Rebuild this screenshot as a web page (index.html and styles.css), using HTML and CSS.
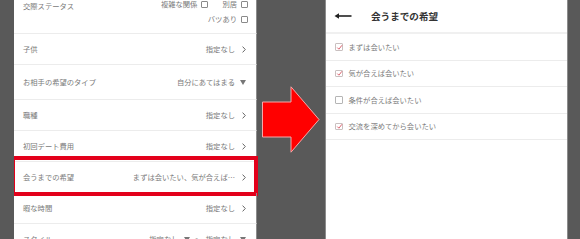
FILE: index.html
```html
<!DOCTYPE html>
<html lang="ja">
<head>
<meta charset="utf-8">
<title>会うまでの希望</title>
<link rel="stylesheet" href="styles.css">
</head>
<body>
<div class="stage">
  <section class="panel panel-left">
    <div class="row row-status">
      <span class="label">交際ステータス</span>
      <div class="checks">
        <div class="check-line">
          <span class="opt">複雑な関係<i class="box"></i></span>
          <span class="opt">別居<i class="box"></i></span>
        </div>
        <div class="check-line">
          <span class="opt">バツあり<i class="box"></i></span>
        </div>
      </div>
    </div>
    <div class="row row-short">
      <span class="label">子供</span>
      <span class="value">指定なし<svg class="chev" viewBox="0 0 4 7"><path d="M0.6 0.6 L3.3 3.5 L0.6 6.4"/></svg></span>
    </div>
    <div class="row row-tall">
      <span class="label">お相手の希望のタイプ</span>
      <span class="value">自分にあてはまる<svg class="tri" viewBox="0 0 6 5"><polygon points="0,0 6,0 3,5"/></svg></span>
    </div>
    <div class="row">
      <span class="label">職種</span>
      <span class="value">指定なし<svg class="chev" viewBox="0 0 4 7"><path d="M0.6 0.6 L3.3 3.5 L0.6 6.4"/></svg></span>
    </div>
    <div class="row">
      <span class="label">初回デート費用</span>
      <span class="value">指定なし<svg class="chev" viewBox="0 0 4 7"><path d="M0.6 0.6 L3.3 3.5 L0.6 6.4"/></svg></span>
    </div>
    <div class="row row-highlight">
      <span class="label">会うまでの希望</span>
      <span class="value">まずは会いたい、気が合えば…<svg class="chev" viewBox="0 0 4 7"><path d="M0.6 0.6 L3.3 3.5 L0.6 6.4"/></svg></span>
    </div>
    <div class="row">
      <span class="label">暇な時間</span>
      <span class="value">指定なし<svg class="chev" viewBox="0 0 4 7"><path d="M0.6 0.6 L3.3 3.5 L0.6 6.4"/></svg></span>
    </div>
    <div class="row">
      <span class="label">スタイル</span>
      <span class="value">指定なし<svg class="tri" viewBox="0 0 6 5"><polygon points="0,0 6,0 3,5"/></svg><span class="tilde">〜</span>指定なし<svg class="tri" viewBox="0 0 6 5"><polygon points="0,0 6,0 3,5"/></svg></span>
    </div>
  </section>

  <div class="gap">
    <svg class="big-arrow" viewBox="0 0 58 67" width="58" height="67">
      <polygon points="0.5,16 29,16 29,0.8 57,33.5 29,66.2 29,51 0.5,51"/>
    </svg>
  </div>

  <section class="panel panel-right">
    <header class="head">
      <svg class="back" viewBox="0 0 18 8" width="18" height="8"><path d="M2 4 H17.5" /><path class="head-tip" d="M0.5 4 L5 1.2 L5 6.8 Z"/></svg>
      <h1 class="title">会うまでの希望</h1>
    </header>
    <ul class="list">
      <li class="item"><i class="cb checked"><svg viewBox="0 0 7 7"><path d="M1.3 3.6 L2.9 5.2 L5.9 1.3"/></svg></i>まずは会いたい</li>
      <li class="item"><i class="cb checked"><svg viewBox="0 0 7 7"><path d="M1.3 3.6 L2.9 5.2 L5.9 1.3"/></svg></i>気が合えば会いたい</li>
      <li class="item"><i class="cb"></i>条件が合えば会いたい</li>
      <li class="item"><i class="cb checked"><svg viewBox="0 0 7 7"><path d="M1.3 3.6 L2.9 5.2 L5.9 1.3"/></svg></i>交流を深めてから会いたい</li>
    </ul>
  </section>
</div>
</body>
</html>
```

FILE: styles.css
```css
* { box-sizing: border-box; }

html, body {
  margin: 0;
  padding: 0;
  height: 100%;
  overflow: hidden;
  background: #595959;
  font-family: "Noto Sans CJK JP", "Noto Sans", sans-serif;
}

.stage {
  display: flex;
  height: 239px;
  padding-left: 14px;
  overflow: hidden;
}

.panel {
  width: 243px;
  height: 239px;
  background: #fff;
  flex: none;
}

.panel-left {
  border-right: 1px solid #8c8c8c;
  overflow: hidden;
  padding: 0 4px 0 0;
  margin-right: -4px;
  background-clip: content-box;
  width: 247px;
  border-right: none;
}

.row {
  position: relative;
  display: flex;
  justify-content: space-between;
  align-items: center;
  height: 31px;
  padding: 0 10px 0 9px;
  border-bottom: 1px solid #ececec;
  border-right: 1px solid #8c8c8c;
  font-size: 7.3px;
  line-height: 10px;
  color: #7a7a7a;
}

.row-short { height: 31px; }
.row-tall { height: 35px; }

.row-status {
  height: 34px;
  align-items: flex-start;
  padding-top: 1px;
  padding-right: 8px;
}

.checks {
  display: flex;
  flex-direction: column;
  align-items: flex-end;
  gap: 5px;
  margin-top: -2px;
}

.check-line {
  display: flex;
  gap: 14px;
}

.opt {
  display: flex;
  align-items: center;
}

.box {
  display: inline-block;
  width: 7px;
  height: 7px;
  margin-left: 4px;
  border: 1px solid #8a8a8a;
  border-radius: 1px;
}

.value {
  display: flex;
  align-items: center;
}

.chev {
  width: 4px;
  height: 7px;
  margin-left: 7px;
  fill: none;
  stroke: #666;
  stroke-width: 1;
}

.tri {
  width: 6px;
  height: 5px;
  margin-left: 5px;
  fill: #777;
}

.tilde {
  margin: 0 4px 0 5px;
}

.row-highlight::after {
  content: "";
  position: absolute;
  top: -6px;
  bottom: -4px;
  left: -3px;
  right: -2px;
  border: 4px solid #e3001b;
}

.gap {
  width: 68px;
  flex: none;
  padding: 86px 0 0 5px;
}

.big-arrow {
  display: block;
  fill: #ff0000;
  stroke: #f6a9a9;
  stroke-width: 1;
}

.panel-right {
  border-left: 1px solid #8c8c8c;
  border-right: 1px solid #8c8c8c;
}

.head {
  display: flex;
  align-items: center;
  height: 34px;
  padding-left: 8px;
  border-bottom: 2px solid #f0f0f0;
}

.back {
  display: block;
  stroke: #222;
  stroke-width: 1.6;
  fill: none;
}

.back .head-tip {
  fill: #222;
  stroke: none;
}

.title {
  margin: 0 0 0 19px;
  font-size: 9.6px;
  font-weight: 700;
  color: #333;
  line-height: 12px;
}

.list {
  list-style: none;
  margin: 0;
  padding: 0;
}

.item {
  display: flex;
  align-items: center;
  height: 26.5px;
  padding-left: 9px;
  border-bottom: 1px solid #ececec;
  font-size: 7.3px;
  color: #7a7a7a;
}

.cb {
  display: inline-block;
  position: relative;
  width: 7.5px;
  height: 7.5px;
  margin-right: 6px;
  border: 1px solid #b5b5b5;
  border-radius: 1px;
}

.cb.checked { border-color: #c9c0c0; }

.cb svg {
  position: absolute;
  left: -0.5px;
  top: -0.5px;
  width: 7px;
  height: 7px;
  fill: none;
  stroke: #d8505e;
  stroke-width: 0.9;
}
```
